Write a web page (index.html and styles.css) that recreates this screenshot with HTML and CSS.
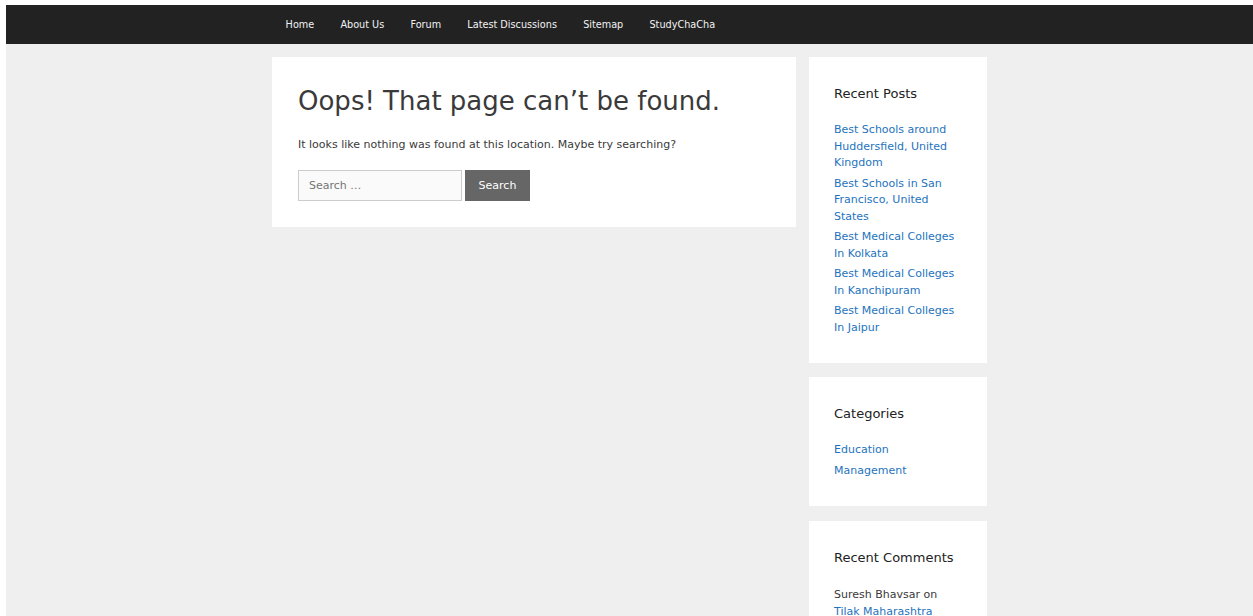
FILE: index.html
```html
<!DOCTYPE html>
<html lang="en">
<head>
<meta charset="utf-8">
<title>Page not found</title>
<link rel="stylesheet" href="styles.css">
</head>
<body>
<div class="page">
  <nav class="main-nav">
    <ul class="menu">
      <li><a href="#">Home</a></li>
      <li><a href="#">About Us</a></li>
      <li><a href="#">Forum</a></li>
      <li><a href="#">Latest Discussions</a></li>
      <li><a href="#">Sitemap</a></li>
      <li><a href="#">StudyChaCha</a></li>
    </ul>
  </nav>
  <div class="site-content">
    <main class="content-area">
      <article class="inside-article">
        <h1 class="entry-title">Oops! That page can’t be found.</h1>
        <p class="entry-text">It looks like nothing was found at this location. Maybe try searching?</p>
        <form class="search-form">
          <input class="search-field" type="search" placeholder="Search …">
          <button class="search-submit" type="button">Search</button>
        </form>
      </article>
    </main>
    <aside class="sidebar">
      <section class="widget">
        <h2 class="widget-title">Recent Posts</h2>
        <ul class="widget-list">
          <li><a href="#">Best Schools around Huddersfield, United Kingdom</a></li>
          <li><a href="#">Best Schools in San Francisco, United States</a></li>
          <li><a href="#">Best Medical Colleges In Kolkata</a></li>
          <li><a href="#">Best Medical Colleges In Kanchipuram</a></li>
          <li><a href="#">Best Medical Colleges In Jaipur</a></li>
        </ul>
      </section>
      <section class="widget">
        <h2 class="widget-title">Categories</h2>
        <ul class="widget-list">
          <li><a href="#">Education</a></li>
          <li><a href="#">Management</a></li>
        </ul>
      </section>
      <section class="widget widget-comments">
        <h2 class="widget-title">Recent Comments</h2>
        <ul class="widget-list">
          <li>Suresh Bhavsar on <a href="#">Tilak Maharashtra Vidyapeeth</a></li>
        </ul>
      </section>
    </aside>
  </div>
</div>
</body>
</html>
```

FILE: styles.css
```css
html, body {
  margin: 0;
  padding: 0;
  background: #ffffff;
}

body {
  font-family: "DejaVu Sans", sans-serif;
  color: #3a3a3a;
}

.page {
  margin: 5px 0 0 6px;
  background: #efefef;
  height: 611px;
  overflow: hidden;
}

a {
  color: #1e73be;
  text-decoration: none;
}

/* top navigation bar */
.main-nav {
  background: #222222;
  height: 39px;
}

.menu {
  list-style: none;
  margin: 0 auto;
  padding: 0;
  width: 715px;
  display: flex;
  height: 39px;
  align-items: center;
}

.menu a {
  display: block;
  color: #f2f2f2;
  font-size: 9.7px;
  line-height: 39px;
  padding: 0 12.6px 0 13.6px;
}

/* two-column layout */
.site-content {
  width: 715px;
  margin: 13px auto 0;
  display: flex;
  gap: 13px;
  align-items: flex-start;
}

.content-area {
  width: 524px;
  flex: none;
}

.inside-article {
  background: #ffffff;
  padding: 26px;
  height: 170px;
  box-sizing: border-box;
}

.entry-title {
  font-size: 26px;
  font-weight: 400;
  line-height: 34px;
  margin: 1px 0 19px;
  color: #3a3a3a;
}

.entry-text {
  font-size: 11px;
  line-height: 16px;
  margin: 0 0 17px;
}

.search-form {
  display: flex;
  gap: 3px;
}

.search-field {
  width: 164px;
  height: 31px;
  box-sizing: border-box;
  border: 1px solid #cccccc;
  background: #fafafa;
  padding: 0 10px;
  font-family: inherit;
  font-size: 11px;
  color: #666666;
  outline: none;
}

.search-field::placeholder {
  color: #757575;
}

.search-submit {
  width: 65px;
  height: 31px;
  border: 0;
  background: #666666;
  color: #ffffff;
  font-family: inherit;
  font-size: 11px;
  padding: 0;
}

/* sidebar widgets */
.sidebar {
  width: 178px;
  flex: none;
  display: flex;
  flex-direction: column;
  gap: 14px;
}

.widget {
  background: #ffffff;
  padding: 26px 25px 23px;
}

.widget-comments {
  margin-top: 1px;
}

.widget-title {
  font-size: 13px;
  font-weight: 400;
  line-height: 20px;
  margin: 1px 0 18px;
  color: #222222;
}

.widget-list {
  list-style: none;
  margin: 0;
  padding: 0;
  font-size: 11px;
  line-height: 16.5px;
}

.widget-list li {
  margin-bottom: 4px;
}

.widget-comments .widget-list {
  padding-top: 1px;
}
```
